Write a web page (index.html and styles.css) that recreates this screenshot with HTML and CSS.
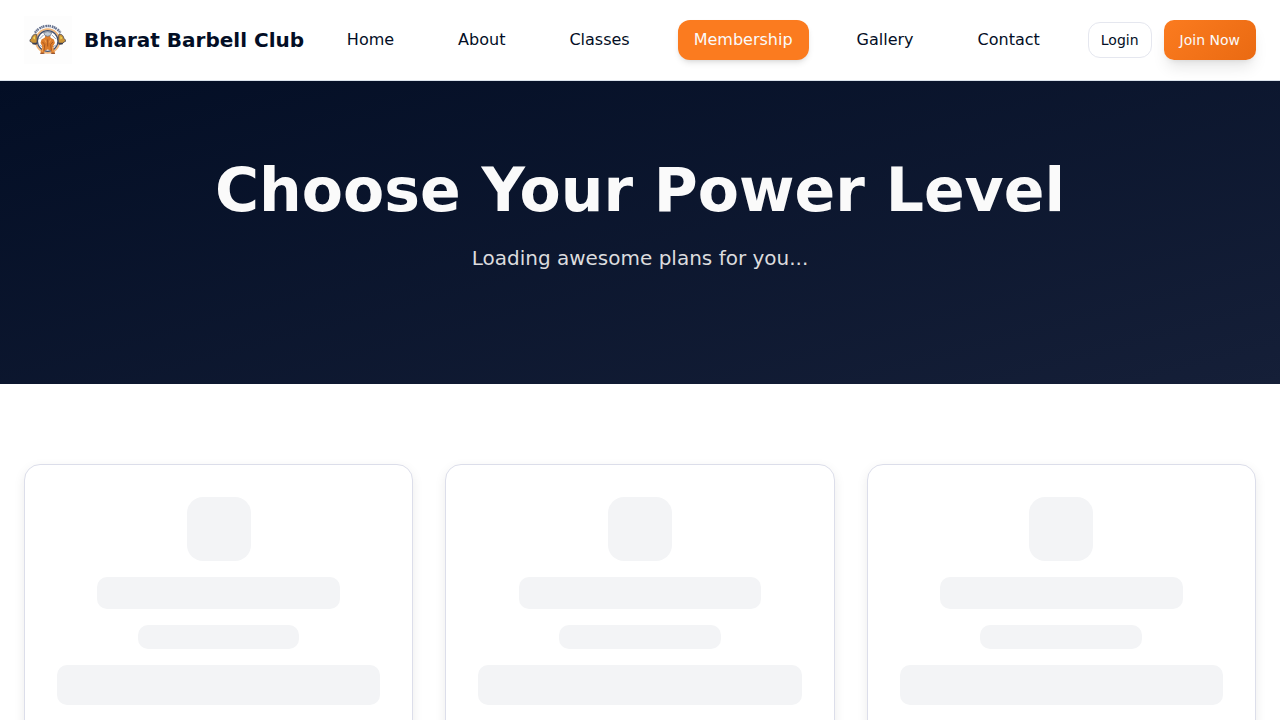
FILE: index.html
```html
<!DOCTYPE html>
<html lang="en">
<head>
<meta charset="utf-8">
<title>Bharat Barbell Club</title>
<link rel="stylesheet" href="styles.css">
</head>
<body>
<header class="header">
  <a class="brand">
    <svg class="logo" viewBox="0 0 48 48" aria-hidden="true">
      <rect width="48" height="48" fill="#fdfdfd"/>
      <path d="M11 16.800A15.200 15.200 0 0 1 36.400 16.800" fill="none" stroke="#66728f" stroke-width="2.500" stroke-dasharray="1.700 .5 1.300 .4 1.500 .9"/>
      <circle cx="23.700" cy="25" r="11.800" fill="#fff" stroke="#f2b679" stroke-width="1.800"/>
      <circle cx="23.700" cy="25" r="10.300" fill="none" stroke="#46506b" stroke-width="1.300"/>
      <path d="M15.500 23l4-4M31.900 23l-4-4M15.500 29l3 2M31.900 29l-3 2" stroke="#9aa2b3" stroke-width="1"/>
      <path d="M12.200 18c-3 0-4.500 2.300-4.700 4.700L6 23.700v1.800l1.600.5c.6 1.500 2 2.300 4.600 2.300 1.300-3 1.300-7.500 0-10.300z" fill="#cc9436" stroke="#4a4650" stroke-width=".8"/>
      <path d="M35.200 18c3 0 4.500 2.300 4.700 4.700l1.500 1v1.800l-1.600.5c-.6 1.500-2 2.300-4.600 2.300-1.300-3-1.300-7.500 0-10.300z" fill="#cc9436" stroke="#4a4650" stroke-width=".8"/>
      <path d="M8.800 22l2.200-2v3.500zM38.600 22l-2.200-2v3.500z" fill="#f2d75a"/>
      <path d="M8.500 27.500h4.500M34.400 27.500h4.500" stroke="#3b3f52" stroke-width="1.700"/>
      <path d="M17.500 23.500l3.200-1.800.8-2.700h4.400l.8 2.700 3.200 1.800 1 3.500-1.700 3 .7 4 1.300 4h-3.200l-1.300-3.500-3-1-3 1-1.300 3.500h-3.200l1.300-4 .7-4-1.700-3z" fill="#dc7c2b"/>
      <path d="M18.500 26l2.300 2.500-.8 6M28.900 26l-2.300 2.500.8 6M23.700 23.500v7" fill="none" stroke="#a2531f" stroke-width=".9"/>
      <path d="M20.700 23.500l1.400 3M26.700 23.500l-1.400 3M19 31l-.8 5M28.400 31l.8 5" stroke="#f2a557" stroke-width=".9"/>
      <path d="M19.500 16.500q4.200-1.800 8.400 0l-1.500 3-2.700.8-2.700-.8z" fill="#c2cad3" stroke="#68748a" stroke-width=".8"/>
      <path d="M16.500 37.300h4M26.900 37.300h4" stroke="#7e4937" stroke-width=".9"/>
    </svg>
    <span class="brand-name">Bharat Barbell Club</span>
  </a>
  <nav class="nav">
    <a class="nav-link">Home</a>
    <a class="nav-link">About</a>
    <a class="nav-link">Classes</a>
    <a class="nav-link nav-link-active">Membership</a>
    <a class="nav-link">Gallery</a>
    <a class="nav-link">Contact</a>
  </nav>
  <div class="actions">
    <button class="button button-outline">Login</button>
    <button class="button button-primary">Join Now</button>
  </div>
</header>
<main>
  <section class="hero">
    <h1 class="hero-title">Choose Your Power Level</h1>
    <p class="hero-text">Loading awesome plans for you...</p>
  </section>
  <section class="plans">
    <div class="card">
      <div class="skeleton skeleton-icon"></div>
      <div class="skeleton skeleton-name"></div>
      <div class="skeleton skeleton-price"></div>
      <div class="skeleton skeleton-button"></div>
    </div>
    <div class="card">
      <div class="skeleton skeleton-icon"></div>
      <div class="skeleton skeleton-name"></div>
      <div class="skeleton skeleton-price"></div>
      <div class="skeleton skeleton-button"></div>
    </div>
    <div class="card">
      <div class="skeleton skeleton-icon"></div>
      <div class="skeleton skeleton-name"></div>
      <div class="skeleton skeleton-price"></div>
      <div class="skeleton skeleton-button"></div>
    </div>
  </section>
</main>
</body>
</html>
```
FILE: styles.css
```css
* { box-sizing: border-box; }
body {
  margin: 0;
  height: 720px;
  overflow: hidden;
  background: #fff;
  color: #030e25;
  font-family: "DejaVu Sans", sans-serif;
}
.header {
  position: relative;
  z-index: 1;
  display: flex;
  align-items: center;
  height: 81px;
  margin-bottom: -1px;
  padding: 0 24px;
  background: #fff;
  border-bottom: 1px solid #dbe3ec;
}
.brand { display: flex; align-items: center; gap: 12px; }
.logo { width: 48px; height: 48px; }
.brand-name { font-size: 20px; line-height: 28px; font-weight: 700; white-space: nowrap; }
.nav { display: flex; align-items: center; gap: 32px; margin: 0 32px 0 auto; }
.nav-link {
  padding: 8px 16px;
  border-radius: 12px;
  font-size: 16px;
  line-height: 24px;
}
.nav-link-active {
  background: #fb7b1f;
  color: #fafafa;
  box-shadow: 0 4px 6px -1px rgba(0, 0, 0, .1), 0 2px 4px -2px rgba(0, 0, 0, .1);
}
.actions { display: flex; align-items: center; gap: 12px; }
.button {
  font-family: inherit;
  font-size: 14px;
  line-height: 20px;
  border-radius: 12px;
  white-space: nowrap;
}
.button-outline {
  height: 36px;
  padding: 0 12px;
  border: 1px solid #e5e7ef;
  background: #fff;
  color: #030e25;
}
.button-primary {
  height: 40px;
  padding: 0 16px;
  border: 0;
  border-radius: 10px;
  background: linear-gradient(135deg, #fb7b1f, #ea6a12);
  color: #fafafa;
  box-shadow: 0 10px 15px -3px rgba(0, 0, 0, .1), 0 4px 6px -4px rgba(0, 0, 0, .1);
}
.hero {
  height: 304px;
  padding: 80px 24px;
  background: linear-gradient(165deg, #030e25, #151f38);
  text-align: center;
}
.hero-title {
  margin: 0 0 24px;
  color: #fafafa;
  font-size: 60px;
  line-height: 60px;
  font-weight: 700;
}
.hero-text { margin: 0; color: #dcdcde; font-size: 20px; line-height: 28px; }
.plans {
  display: grid;
  grid-template-columns: repeat(3, 1fr);
  gap: 32px;
  padding: 80px 24px 0;
}
.card {
  display: flex;
  flex-direction: column;
  align-items: center;
  gap: 16px;
  height: 420px;
  padding: 32px;
  border: 1px solid #dcdeea;
  border-radius: 16px;
  background: #fff;
  box-shadow: 0 4px 12px rgba(0, 0, 0, .08);
}
.skeleton { flex: none; border-radius: 10px; background: #f3f4f6; }
.skeleton-icon { width: 64px; height: 64px; border-radius: 16px; }
.skeleton-name { width: 75%; height: 32px; }
.skeleton-price { width: 50%; height: 24px; }
.skeleton-button { width: 100%; height: 40px; }
```
